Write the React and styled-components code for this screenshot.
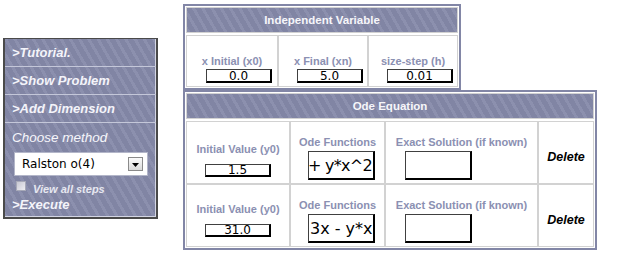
import React from 'react';
import styled, { createGlobalStyle, css } from 'styled-components';

const GlobalStyle = createGlobalStyle`
  html, body { margin: 0; padding: 0; background: #ffffff; }
  body { font-family: "Liberation Sans", Arial, sans-serif; }
`;

const texture = css`
  background-color: #8589a9;
  background-image: repeating-linear-gradient(
    60deg,
    rgba(255, 255, 255, 0.06) 0px,
    rgba(255, 255, 255, 0.06) 3px,
    rgba(0, 0, 0, 0.03) 3px,
    rgba(0, 0, 0, 0.03) 8px
  );
`;

const Page = styled.div`
  display: flex;
  align-items: flex-start;
  width: 621px;
  height: 262px;
  overflow: hidden;
`;

/* ---------- left menu ---------- */

const SidePanel = styled.nav`
  margin: 38px 0 0 3px;
  width: 155px;
  box-sizing: border-box;
  border: 2px solid #4a4a4a;
  border-top-width: 1px;
  ${texture}
  box-shadow: inset -1px -1px 0 #d4d6e4;
  padding-bottom: 4px;
  display: flex;
  flex-direction: column;
`;

const MenuItem = styled.div`
  height: 27px;
  border-bottom: 1px solid #c4c7d9;
  padding-left: 7px;
  display: flex;
  align-items: center;
  font: italic bold 13px "Liberation Sans", Arial, sans-serif;
  color: #f4f4fa;
`;

const MethodSection = styled.div`
  display: flex;
  flex-direction: column;
  padding-top: 7px;
`;

const MethodTitle = styled.div`
  margin-left: 7px;
  font: italic 13.5px/16px "Liberation Sans", Arial, sans-serif;
  color: #f6f6fb;
`;

const SelectBox = styled.div`
  margin: 6px 0 0 9px;
  width: 134px;
  height: 24px;
  box-sizing: border-box;
  background: #ffffff;
  border: 1px solid #b3b6c9;
  display: flex;
  align-items: center;
  justify-content: space-between;
  padding: 0 4px 0 7px;
  font: 12px "DejaVu Sans", Verdana, sans-serif;
  color: #000;
`;

const SelectButton = styled.span`
  width: 15px;
  height: 14px;
  box-sizing: border-box;
  border: 1px solid #8a8a8a;
  background: linear-gradient(#fbfbfb, #d9d9d9);
  display: flex;
  align-items: center;
  justify-content: center;
  padding-top: 2px;
`;

const CheckRow = styled.div`
  margin: 5px 0 0 11px;
  height: 13px;
  display: flex;
  align-items: flex-start;
  gap: 7px;
`;

const CheckBox = styled.span`
  width: 10px;
  height: 10px;
  box-sizing: border-box;
  border: 1px solid #a7a9b8;
  background: linear-gradient(135deg, #c6c7d2, #eeeef3);
`;

const CheckLabel = styled.span`
  margin-top: 2px;
  font: italic bold 11px/13px "Liberation Sans", Arial, sans-serif;
  color: #e6e7f0;
`;

const ExecuteLink = styled.div`
  margin: 3px 0 0 7px;
  font: italic bold 13px/16px "Liberation Sans", Arial, sans-serif;
  color: #f4f4fa;
`;

/* ---------- right tables ---------- */

const Column = styled.div`
  margin: 4px 0 0 25px;
  display: flex;
  flex-direction: column;
  align-items: flex-start;
`;

const Box = styled.section`
  width: ${(p) => p.$w}px;
  box-sizing: border-box;
  border: 2px solid #8286a6;
  padding: 1px;
  background: #fff;
  display: flex;
  flex-direction: column;
  gap: 2px;
`;

const BoxHeader = styled.div`
  height: 24px;
  border: 1px solid #d2d2d2;
  ${texture}
  display: flex;
  align-items: center;
  justify-content: center;
  font: bold 11.5px "Liberation Sans", Arial, sans-serif;
  color: #f6f6fa;
`;

const Grid = styled.div`
  display: grid;
  grid-template-columns: ${(p) => p.$cols};
  grid-auto-rows: ${(p) => p.$row}px;
  gap: 2px;
  background: #d2d2d2;
  border: 1px solid #d2d2d2;
`;

const Cell = styled.div`
  background: #fff;
  box-sizing: border-box;
  padding-top: ${(p) => p.$pt}px;
  display: flex;
  flex-direction: column;
  align-items: center;
  justify-content: center;
  gap: ${(p) => p.$gap || 0}px;
`;

const Label = styled.div`
  font: bold 11px/13px "Liberation Sans", Arial, sans-serif;
  color: #8b90b2;
  white-space: nowrap;
`;

const fieldFrame = css`
  box-sizing: border-box;
  border-style: solid;
  border-width: 1px 2px 2px 1px;
  border-color: #404040 #000 #000 #404040;
  background: #fff;
  color: #000;
  display: flex;
  align-items: center;
  white-space: nowrap;
  overflow: hidden;
`;

const SmallField = styled.div`
  ${fieldFrame}
  width: 66px;
  height: ${(p) => p.$h}px;
  margin-left: ${(p) => p.$ml || 0}px;
  justify-content: center;
  padding-top: 1px;
  font: 12px/1 "DejaVu Sans", Verdana, sans-serif;
`;

const BigField = styled.div`
  ${fieldFrame}
  align-self: flex-start;
  margin-left: ${(p) => p.$ml}px;
  width: 67px;
  height: 29px;
  justify-content: ${(p) => (p.$end ? 'flex-end' : 'flex-start')};
  padding: 0 1px;
  font: 16px "DejaVu Sans", Verdana, sans-serif;
  letter-spacing: ${(p) => (p.$end ? '-0.7px' : '0')};
`;

const DeleteLink = styled.div`
  font: italic bold 12.5px "Liberation Sans", Arial, sans-serif;
  color: #000;
`;

const menu = ['>Tutorial.', '>Show Problem', '>Add Dimension'];

const indep = [
  { label: 'x Initial (x0)', value: '0.0' },
  { label: 'x Final (xn)', value: '5.0' },
  { label: 'size-step (h)', value: '0.01' },
];

const odes = [
  { y0: '1.5', fn: '+ y*x^2', end: true, pt: 14 },
  { y0: '31.0', fn: '3x - y*x', end: false, pt: 8 },
];

export default function App() {
  return (
    <Page>
      <GlobalStyle />
      <SidePanel>
        {menu.map((m) => (
          <MenuItem key={m}>{m}</MenuItem>
        ))}
        <MethodSection>
          <MethodTitle>Choose method</MethodTitle>
          <SelectBox>
            <span>Ralston o(4)</span>
            <SelectButton>
              <svg width="7" height="4" viewBox="0 0 7 4">
                <path d="M0 0 H7 L3.5 4 Z" fill="#000" />
              </svg>
            </SelectButton>
          </SelectBox>
          <CheckRow>
            <CheckBox />
            <CheckLabel>View all steps</CheckLabel>
          </CheckRow>
          <ExecuteLink>&gt;Execute</ExecuteLink>
        </MethodSection>
      </SidePanel>

      <Column>
        <Box $w={278}>
          <BoxHeader>Independent Variable</BoxHeader>
          <Grid $cols="90px 88px 1fr" $row={50}>
            {indep.map((c) => (
              <Cell key={c.label} $pt={15} $gap={1}>
                <Label>{c.label}</Label>
                <SmallField $h={14} $ml={14}>{c.value}</SmallField>
              </Cell>
            ))}
          </Grid>
        </Box>
        <Box $w={414}>
          <BoxHeader>Ode Equation</BoxHeader>
          <Grid $cols="102px 93px 151px 1fr" $row={61}>
            {odes.map((o) => (
              <React.Fragment key={o.y0}>
                <Cell $pt={o.pt} $gap={8}>
                  <Label>Initial Value (y0)</Label>
                  <SmallField $h={13}>{o.y0}</SmallField>
                </Cell>
                <Cell $pt={11} $gap={2}>
                  <Label>Ode Functions</Label>
                  <BigField $ml={17} $end={o.end}>{o.fn}</BigField>
                </Cell>
                <Cell $pt={11} $gap={2}>
                  <Label>Exact Solution (if known)</Label>
                  <BigField $ml={19} />
                </Cell>
                <Cell $pt={9}>
                  <DeleteLink>Delete</DeleteLink>
                </Cell>
              </React.Fragment>
            ))}
          </Grid>
        </Box>
      </Column>
    </Page>
  );
}
